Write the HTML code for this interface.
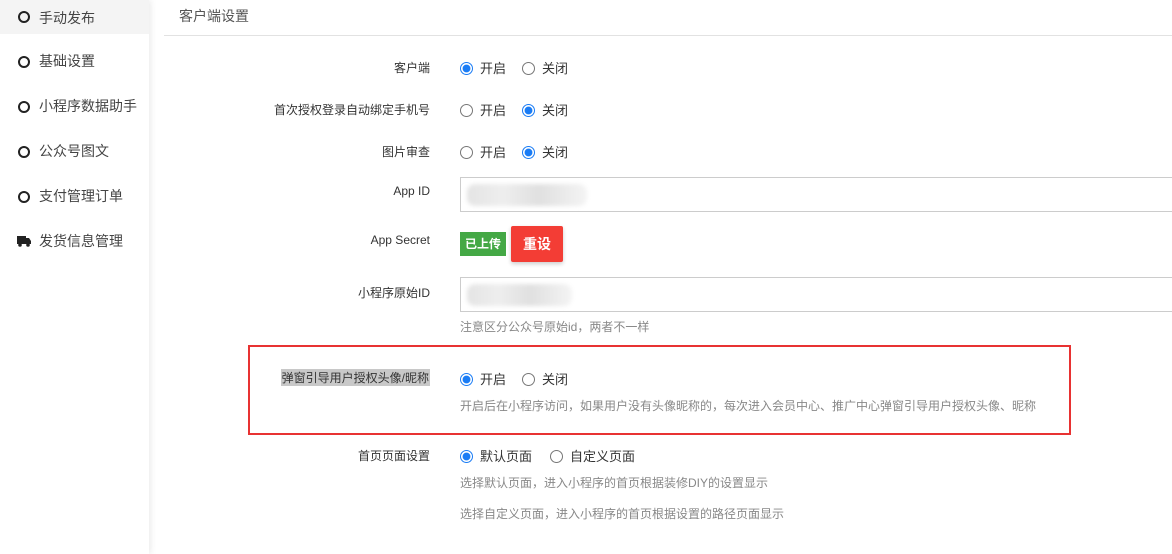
<!DOCTYPE html>
<html><head><meta charset="utf-8"><style>
*{margin:0;padding:0;box-sizing:border-box}
body{width:1172px;height:554px;overflow:hidden;background:#fff;font-family:"Liberation Sans","Noto Sans CJK SC",sans-serif;color:#333;position:relative}
.a{position:absolute;white-space:nowrap}
.side{position:absolute;left:0;top:0;width:149px;height:554px;background:#fff;box-shadow:2px 0 6px rgba(0,0,0,.08)}
.si{position:absolute;left:0;width:149px;height:34px;font-size:14px;color:#444}
.si .c{position:absolute;left:18px;top:12px;width:12px;height:12px;border:2px solid #222;border-radius:50%}
.si span{position:absolute;left:39px;top:7px}
.lbl{position:absolute;right:742px;font-size:12px;color:#333;white-space:nowrap}
.r{position:absolute;width:13px;height:13px;border:1px solid #777;border-radius:50%}
.r.on{border:1px solid #1a7cf5;background:radial-gradient(circle,#1a7cf5 0 3.6px,#fff 4.2px)}
.t{position:absolute;font-size:13px;color:#333;white-space:nowrap}
.n{position:absolute;left:460px;font-size:12px;color:#888;white-space:nowrap}
.inp{position:absolute;left:460px;width:720px;height:35px;border:1px solid #ccc;background:#fff}
.blur{position:absolute;left:6px;top:6px;height:22px;background:linear-gradient(90deg,#e4e4e4,#eee 30%,#e0e0e0 60%,#f4f4f4);filter:blur(2px);border-radius:8px}
</style></head><body>
<div class="side">
<div class="si" style="top:0;background:#f4f4f4"><div class="c" style="top:11px"></div><span style="top:8px">手动发布</span></div>
<div class="si" style="top:44px"><div class="c"></div><span>基础设置</span></div>
<div class="si" style="top:89px"><div class="c"></div><span>小程序数据助手</span></div>
<div class="si" style="top:134px"><div class="c"></div><span>公众号图文</span></div>
<div class="si" style="top:179px"><div class="c"></div><span>支付管理订单</span></div>
<div class="si" style="top:224px"><svg style="position:absolute;left:17px;top:12px" width="14" height="11" viewBox="0 0 14 11"><rect x="0" y="0" width="9" height="8" fill="#222"/><path d="M9 2h3l2 3v3H9z" fill="#222"/><circle cx="3" cy="9" r="1.8" fill="#222"/><circle cx="11" cy="9" r="1.8" fill="#222"/></svg><span>发货信息管理</span></div>
</div>
<div class="a" style="left:179px;top:6px;font-size:14px;color:#555">客户端设置</div>
<div class="a" style="left:164px;top:35px;width:1008px;height:1px;background:#e2e2e2"></div>

<div class="lbl" style="top:59px">客户端</div>
<div class="r on" style="left:460px;top:62px"></div><div class="t" style="left:480px;top:58px">开启</div>
<div class="r" style="left:522px;top:62px"></div><div class="t" style="left:542px;top:58px">关闭</div>

<div class="lbl" style="top:101px">首次授权登录自动绑定手机号</div>
<div class="r" style="left:460px;top:104px"></div><div class="t" style="left:480px;top:100px">开启</div>
<div class="r on" style="left:522px;top:104px"></div><div class="t" style="left:542px;top:100px">关闭</div>

<div class="lbl" style="top:143px">图片审查</div>
<div class="r" style="left:460px;top:146px"></div><div class="t" style="left:480px;top:142px">开启</div>
<div class="r on" style="left:522px;top:146px"></div><div class="t" style="left:542px;top:142px">关闭</div>

<div class="lbl" style="top:184px">App ID</div>
<div class="inp" style="top:177px"><div class="blur" style="width:120px"></div></div>

<div class="lbl" style="top:233px">App Secret</div>
<div class="a" style="left:460px;top:232px;width:46px;height:24px;background:#44a845;color:#fff;font-size:12px;font-weight:bold;text-align:center;line-height:24px">已上传</div>
<div class="a" style="left:511px;top:226px;width:52px;height:36px;background:#f33d35;color:#fff;font-size:14px;font-weight:bold;text-align:center;line-height:36px;border-radius:2px;box-shadow:0 2px 4px rgba(0,0,0,.2)">重设</div>

<div class="lbl" style="top:284px">小程序原始ID</div>
<div class="inp" style="top:277px"><div class="blur" style="width:105px"></div></div>
<div class="n" style="top:318px">注意区分公众号原始id，两者不一样</div>

<div class="a" style="left:248px;top:345px;width:823px;height:90px;border:2px solid #e83232"></div>
<div class="lbl" style="top:369px;background:#c8c8c8;padding:0 1px">弹窗引导用户授权头像/昵称</div>
<div class="r on" style="left:460px;top:373px"></div><div class="t" style="left:480px;top:369px">开启</div>
<div class="r" style="left:522px;top:373px"></div><div class="t" style="left:542px;top:369px">关闭</div>
<div class="n" style="top:397px">开启后在小程序访问，如果用户没有头像昵称的，每次进入会员中心、推广中心弹窗引导用户授权头像、昵称</div>

<div class="lbl" style="top:447px">首页页面设置</div>
<div class="r on" style="left:460px;top:450px"></div><div class="t" style="left:480px;top:446px">默认页面</div>
<div class="r" style="left:550px;top:450px"></div><div class="t" style="left:570px;top:446px">自定义页面</div>
<div class="n" style="top:474px">选择默认页面，进入小程序的首页根据装修DIY的设置显示</div>
<div class="n" style="top:505px">选择自定义页面，进入小程序的首页根据设置的路径页面显示</div>
</body></html>
